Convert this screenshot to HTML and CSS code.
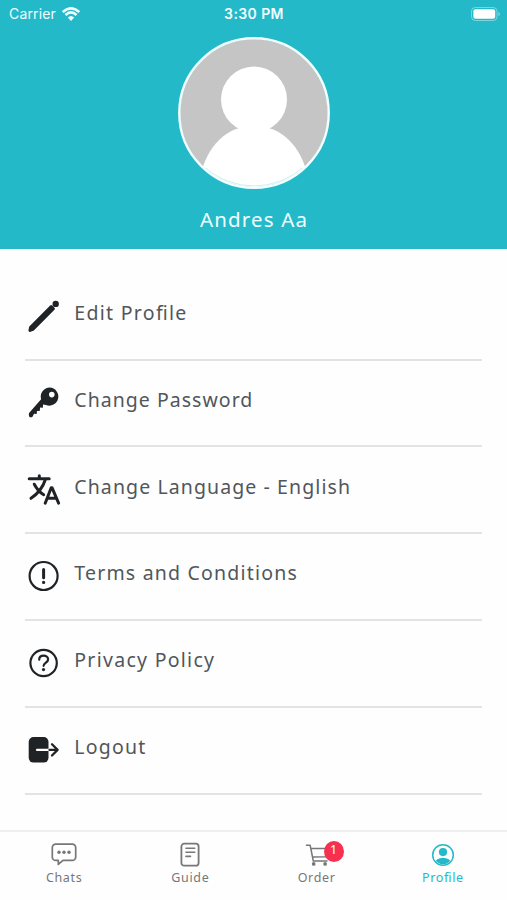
FILE: index.html
```html
<!DOCTYPE html>
<html lang="en">
<head>
<meta charset="utf-8">
<title>Profile</title>
<link rel="stylesheet" href="styles.css">
</head>
<body>
<div class="screen">
  <header class="header">
    <div class="status">
      <div class="carrier"><span>Carrier</span>
        <svg width="18" height="14" viewBox="0 0 18 14" fill="none" stroke="currentColor" stroke-width="2.6"><path d="M.7 5Q9-2.4 17.3 5M3.5 8Q9 2.9 14.5 8"/><path d="M9 13.9 5.8 10.5Q9 7.5 12.2 10.5Z" fill="currentColor" stroke="none"/></svg>
      </div>
      <div class="time">3:30 PM</div>
      <svg class="battery" width="30" height="14" viewBox="0 0 30 14"><rect x=".5" y=".5" width="25.5" height="13" rx="3.8" fill="none" stroke="#fff" stroke-opacity=".4"/><rect x="2.4" y="2.3" width="21.8" height="9.4" rx="2" fill="#fff"/><path d="M27.5 4.7q2.6 2.3 0 4.6z" fill="#fff" opacity=".5"/></svg>
    </div>
    <svg class="avatar" width="152" height="152" viewBox="0 0 152 152">
      <defs><clipPath id="face"><circle cx="76" cy="76" r="74"/></clipPath></defs>
      <circle cx="76" cy="76" r="74" fill="#c5c5c5"/>
      <g fill="#fff" clip-path="url(#face)"><circle cx="76" cy="62.5" r="33"/><path d="M22 140C29 109 48 89 76 89s47 20 54 51v14H22z"/></g>
      <path d="M28 131a73 73 0 0 0 96 0" fill="none" stroke="#bfe9ed" stroke-width=".8"/>
      <circle cx="76" cy="76" r="74.7" fill="none" stroke="#f3ffff" stroke-width="2.4"/>
    </svg>
    <h1 class="name">Andres Aa</h1>
  </header>
  <main class="menu">
    <div class="row"><svg class="icon" viewBox="0 0 34 34"><path d="M3.6 28.2 24.2 7.6l2.2 2.2L5.8 30.4 3 31.4z" fill="currentColor" stroke="currentColor" stroke-width="3" stroke-linejoin="round"/><circle cx="28.7" cy="4.9" r="3.2" fill="currentColor"/></svg><span class="label edit">Edit Profile</span></div>
    <div class="row"><svg class="icon" viewBox="0 0 34 34"><path fill="currentColor" fill-rule="evenodd" d="M22.8 1.6a9 9 0 0 0-8.7 11.6L2.3 26.8c-.7.8-.5 2.3-.2 3.4.3 1.5 2.6 1.3 3.6.2l1.3-2.6 2.7.1.3-3 2.7.1.4-3.4 2.8.1.1-3.2 2.9.4a9 9 0 1 0 3.9-17.3Zm2 4.2a2.8 2.8 0 1 1 0 5.6 2.8 2.8 0 0 1 0-5.6Z"/></svg><span class="label password">Change Password</span></div>
    <div class="row"><svg class="icon" viewBox="0 0 34 34" fill="none" stroke="currentColor" stroke-width="3" stroke-linecap="round" stroke-linejoin="round"><path d="M2.2 5.8h20M12.3 2.8v2.5M18.4 6.5C15.8 14.5 10.5 21 4 25.3M7.3 11.2c2.2 4.3 5.6 8.2 9.4 10.5M18.2 30.2l6-15.5h.8l6.6 15.5M21 25.3h7.8"/></svg><span class="label language">Change Language - English</span></div>
    <div class="row"><svg class="icon" viewBox="0 0 34 34" fill="none" stroke="currentColor" stroke-linecap="round"><circle cx="16.6" cy="17" r="14" stroke-width="2.2"/><path d="M16.6 10.4v8.3" stroke-width="3"/><circle cx="16.6" cy="23.4" r="1.6" fill="currentColor" stroke="none"/></svg><span class="label terms">Terms and Conditions</span></div>
    <div class="row"><svg class="icon" viewBox="0 0 34 34" fill="none" stroke="currentColor" stroke-width="2.2" stroke-linecap="round"><circle cx="16.6" cy="17" r="13.2"/><path d="M12.2 13.7c0-2.6 2-4 4.4-4s4.5 1.4 4.5 3.8c0 3.1-4.3 3.2-4.5 6.3"/><circle cx="16.5" cy="23.6" r="1.6" fill="currentColor" stroke="none"/></svg><span class="label privacy">Privacy Policy</span></div>
    <div class="row"><svg class="icon" viewBox="0 0 34 34"><rect x="1.7" y="4" width="19.8" height="25.6" rx="4.8" fill="currentColor"/><path d="M10 16.9h11.6" stroke="#fff" stroke-width="2.2" stroke-linecap="round"/><path d="M22.5 16.9H30m-5-5.6 5.6 5.6-5.6 5.6" fill="none" stroke="currentColor" stroke-width="2.3" stroke-linecap="round" stroke-linejoin="round"/></svg><span class="label logout">Logout</span></div>
  </main>
  <nav class="tabs">
    <div class="tab"><svg width="26" height="26" viewBox="0 0 26 26" fill="none" stroke="currentColor" stroke-width="1.7" stroke-linejoin="round"><path d="M4.7 2.1h16.6a3.4 3.4 0 0 1 3.4 3.4v9.4a3.4 3.4 0 0 1-3.4 3.4H12l-4.7 4.1v-4.1H4.7a3.4 3.4 0 0 1-3.4-3.4V5.5a3.4 3.4 0 0 1 3.4-3.4Z"/><g fill="currentColor" stroke="none"><circle cx="8" cy="10.3" r="1.7"/><circle cx="13" cy="10.3" r="1.7"/><circle cx="18" cy="10.3" r="1.7"/></g></svg><span>Chats</span></div>
    <div class="tab"><svg width="26" height="26" viewBox="0 0 26 26" fill="none" stroke="currentColor" stroke-width="1.8" stroke-linecap="round"><rect x="4.4" y="1.7" width="17.2" height="22" rx="2.8"/><path d="M9 6.2h8.7M9 10.3h8.7M9 14.4h4.5" stroke-width="1.6"/></svg><span>Guide</span></div>
    <div class="tab"><div class="cart"><svg width="26" height="26" viewBox="0 0 26 26" fill="none" stroke="currentColor" stroke-width="1.5" stroke-linecap="round" stroke-linejoin="round"><path d="M2.5 3.3h3.7L9.3 19H23M7 6.5h17.5l-2 8.3L8.6 15"/><circle cx="9.7" cy="21.9" r="1.1" fill="currentColor"/><circle cx="21.1" cy="21.9" r="1.1" fill="currentColor"/></svg><b class="badge">1</b></div><span>Order</span></div>
    <div class="tab active"><svg width="26" height="26" viewBox="0 0 26 26"><defs><clipPath id="tab-face"><circle cx="13" cy="13" r="9.2"/></clipPath></defs><circle cx="13" cy="13" r="10.3" fill="none" stroke="currentColor" stroke-width="1.5"/><g clip-path="url(#tab-face)" fill="currentColor"><circle cx="13" cy="10.1" r="4.1"/><ellipse cx="13" cy="21" rx="8" ry="5.2"/></g></svg><span class="ligated">Profile</span></div>
  </nav>
</div>
</body>
</html>
```

FILE: styles.css
```css
* { box-sizing: border-box; }
body { margin: 0; background: #fff; font-family: "Noto Sans", sans-serif; }
.screen { height: 900px; display: flex; flex-direction: column; overflow: hidden; background: #fefefe; }
.header { height: 249px; background: #24b9c9; color: #f1ffff; display: flex; flex-direction: column; align-items: center; }
.status { width: 100%; height: 27px; padding: 0 6px 0 9px; display: grid; grid-template-columns: 1fr auto 1fr; align-items: center; font-family: Inter, sans-serif; font-size: 14px; }
.carrier { display: flex; align-items: center; gap: 6px; letter-spacing: .15px; }
.time { font-weight: 600; letter-spacing: .4px; margin-right: 2px; }
.battery { justify-self: end; }
.avatar { margin-top: 10px; flex: none; }
.name { margin: 15px 0 0 1px; font-size: 20.5px; line-height: 30px; font-weight: 400; letter-spacing: 1.15px; }
.menu { padding: 24.9px 25px 0; flex: 1; color: #202326; }
.row { height: 86.8px; border-bottom: 2px solid #e3e3e4; display: flex; align-items: flex-start; }
.icon { width: 34px; height: 34px; margin: 25.1px 13.3px 0 2px; flex: none; }
.label { margin-top: 24.1px; color: #51565b; font-size: 19.5px; line-height: 30px; white-space: nowrap; }
.edit { letter-spacing: 1.3px; }
.edit, .ligated { font-feature-settings: "liga" 1; }
.password { letter-spacing: 1.03px; }
.language { letter-spacing: 1.1px; }
.terms { letter-spacing: 1.2px; }
.privacy { letter-spacing: 1.28px; }
.logout { letter-spacing: 1.2px; }
.tabs { height: 70px; border-top: 2px solid #efefef; display: flex; color: #777; }
.tab { flex: 1; display: flex; flex-direction: column; align-items: center; padding-top: 10px; font-size: 12.5px; line-height: 20px; letter-spacing: .65px; }
.tab:first-child { padding-left: 1px; }
.tab:last-child { padding-right: 1px; }
.tab svg { display: block; }
.active { color: #24b9c9; }
.cart { position: relative; }
.badge { position: absolute; left: 20px; top: -1px; width: 20px; height: 21px; border-radius: 50%; background: #f8304f; color: #fff; font-size: 12.5px; line-height: 17px; font-weight: 400; letter-spacing: 0; text-align: center; }
```
